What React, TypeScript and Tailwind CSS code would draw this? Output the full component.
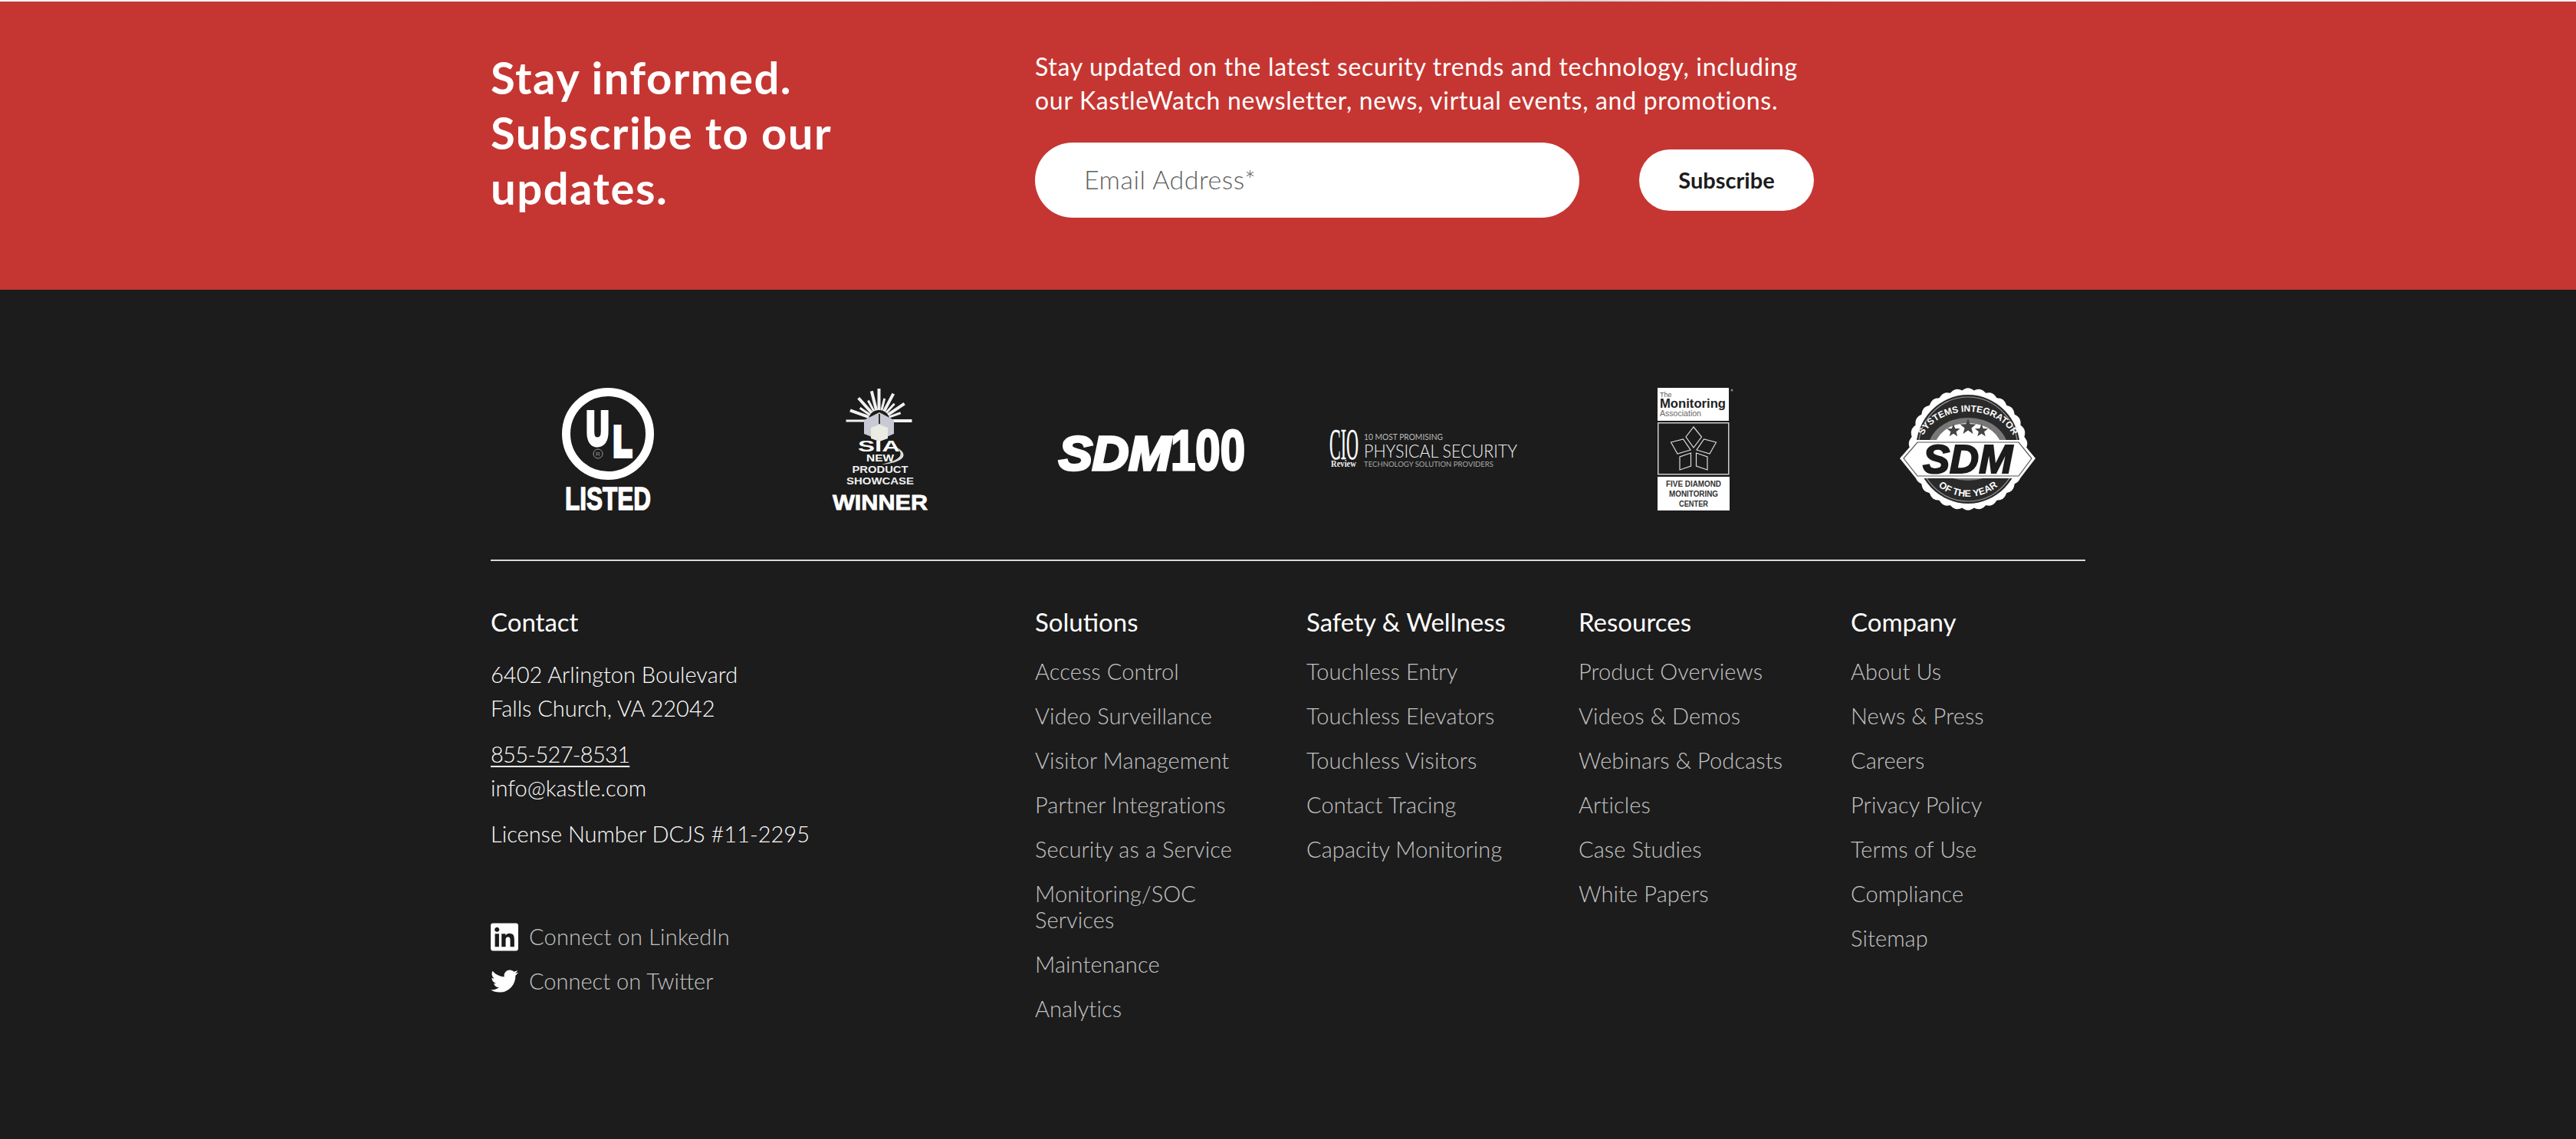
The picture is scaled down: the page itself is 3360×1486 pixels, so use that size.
import { FaLinkedin, FaTwitter } from "react-icons/fa";

const columns = [
  {
    title: "Solutions",
    links: [
      "Access Control",
      "Video Surveillance",
      "Visitor Management",
      "Partner Integrations",
      "Security as a Service",
      "Monitoring/SOC Services",
      "Maintenance",
      "Analytics",
    ],
  },
  {
    title: "Safety & Wellness",
    links: ["Touchless Entry", "Touchless Elevators", "Touchless Visitors", "Contact Tracing", "Capacity Monitoring"],
  },
  {
    title: "Resources",
    links: ["Product Overviews", "Videos & Demos", "Webinars & Podcasts", "Articles", "Case Studies", "White Papers"],
  },
  {
    title: "Company",
    links: ["About Us", "News & Press", "Careers", "Privacy Policy", "Terms of Use", "Compliance", "Sitemap"],
  },
];

const sans = "Liberation Sans, Arial, sans-serif";
const serif = "Liberation Serif, serif";
const lato = "Lato, sans-serif";

const UlLogo = () => (
  <svg width="124" height="160" viewBox="0 0 124 160" className="overflow-visible">
    <circle cx="62" cy="60" r="54.5" fill="none" stroke="#fff" strokeWidth="11" />
    <text x="34" y="74" fill="#fff" stroke="#fff" strokeWidth="6" fontFamily={sans} fontWeight="700" fontSize="61" textLength="29" lengthAdjust="spacingAndGlyphs">U</text>
    <text x="69" y="89" fill="#fff" stroke="#fff" strokeWidth="6" fontFamily={sans} fontWeight="700" fontSize="56" textLength="24" lengthAdjust="spacingAndGlyphs">L</text>
    <circle cx="49" cy="86" r="6" fill="none" stroke="#999" strokeWidth="1" />
    <text x="49" y="89" fill="#999" fontFamily={sans} fontSize="8" textAnchor="middle">R</text>
    <text x="6" y="158.5" fill="#fff" stroke="#fff" strokeWidth="1.5" fontFamily={sans} fontWeight="700" fontSize="42" textLength="112" lengthAdjust="spacingAndGlyphs">LISTED</text>
  </svg>
);

const rayAngles = [-90, -76, -62, -48, -34, -20, 0, 180, 200, 214, 228, 242, 256];

const SiaLogo = () => (
  <svg width="124" height="160" viewBox="0 0 124 160" className="overflow-visible">
    {rayAngles.map((a, i) => {
      const long = i % 2 === 0;
      const r = (a * Math.PI) / 180;
      const len = a === 0 || a === 180 ? 43 : a === -90 ? 42 : long ? 40 : 30;
      return (
        <line
          key={a}
          x1={60.5 + Math.cos(r) * 14}
          y1={43 + Math.sin(r) * 14}
          x2={60.5 + Math.cos(r) * len}
          y2={43 + Math.sin(r) * len}
          stroke="#f1f1f1"
          strokeWidth={long ? 4 : 3}
        />
      );
    })}
    <path d="M61 32 L80 42 L80 60 L61 68 L41 60 L41 42 Z" fill="#c9c9d6" />
    <path d="M50 52 L61 48 L72 52 L72 66 L61 70 L50 66 Z" fill="#ecebe2" />
    <path d="M61 34 L61 47" stroke="#333" strokeWidth="2" />
    <text x="33" y="83" fill="#fff" fontFamily={sans} fontWeight="700" fontSize="21" textLength="55" lengthAdjust="spacingAndGlyphs">SIA</text>
    <path d="M64 100 C90 98 102 88 84 78 C94 88 88 94 64 100 Z" fill="#ddd" />
    <text x="62" y="96" fill="#fff" fontFamily={sans} fontWeight="700" fontSize="13.5" textAnchor="middle" textLength="36" lengthAdjust="spacingAndGlyphs">NEW</text>
    <text x="62" y="111" fill="#f0f0f0" fontFamily={sans} fontWeight="700" fontSize="13.5" textAnchor="middle" textLength="73" lengthAdjust="spacingAndGlyphs">PRODUCT</text>
    <text x="62" y="126" fill="#f0f0f0" fontFamily={sans} fontWeight="700" fontSize="13.5" textAnchor="middle" textLength="88" lengthAdjust="spacingAndGlyphs">SHOWCASE</text>
    <text x="0" y="159" fill="#fff" stroke="#fff" strokeWidth="0.8" fontFamily={sans} fontWeight="700" fontSize="28" textLength="124" lengthAdjust="spacingAndGlyphs">WINNER</text>
  </svg>
);

const Sdm100Logo = () => (
  <svg width="243" height="56" viewBox="0 0 243 56" className="overflow-visible">
    <text x="0" y="55" fill="#fff" stroke="#fff" strokeWidth="3.5" fontFamily={sans} fontWeight="700" fontStyle="italic" fontSize="63" textLength="146" lengthAdjust="spacingAndGlyphs">SDM</text>
    <text x="146" y="55" fill="#fff" stroke="#fff" strokeWidth="3" fontFamily={sans} fontWeight="700" fontSize="75" textLength="97" lengthAdjust="spacingAndGlyphs">100</text>
  </svg>
);

const CioLogo = () => (
  <svg width="246" height="50" viewBox="0 0 246 50" className="overflow-visible">
    <text x="0" y="38" fill="#fff" stroke="#fff" strokeWidth="0.4" fontFamily={serif} fontSize="58" textLength="38" lengthAdjust="spacingAndGlyphs">CIO</text>
    <text x="2" y="48" fill="#eee" fontFamily={serif} fontWeight="700" fontSize="12" textLength="33" lengthAdjust="spacingAndGlyphs">Review</text>
    <text x="45" y="13" fill="#bbb" fontFamily={lato} fontSize="11" textLength="103" lengthAdjust="spacingAndGlyphs">10 MOST PROMISING</text>
    <text x="45" y="36" fill="#f2f2f2" fontFamily={lato} fontWeight="300" fontSize="24" textLength="200" lengthAdjust="spacingAndGlyphs">PHYSICAL SECURITY</text>
    <text x="45" y="48" fill="#aaa" fontFamily={lato} fontSize="10" textLength="169" lengthAdjust="spacingAndGlyphs">TECHNOLOGY SOLUTION PROVIDERS</text>
  </svg>
);

const MonitoringLogo = () => (
  <svg width="100" height="160" viewBox="0 0 100 160" className="overflow-visible">
    <rect x="0" y="0" width="93" height="43" fill="#fff" />
    <text x="3" y="12" fill="#555" fontFamily={sans} fontSize="9">The</text>
    <text x="3" y="26" fill="#222" fontFamily={sans} fontWeight="700" fontSize="16" textLength="86" lengthAdjust="spacingAndGlyphs">Monitoring</text>
    <text x="3" y="37" fill="#666" fontFamily={sans} fontSize="10" textLength="54" lengthAdjust="spacingAndGlyphs">Association</text>
    <circle cx="97" cy="3" r="1.5" fill="#888" />
    <rect x="0.75" y="45.75" width="92" height="67" fill="none" stroke="#ccc" strokeWidth="1.5" />
    <g fill="none" stroke="#ddd" strokeWidth="1.2">
      <path d="M47 51 L57.5 64 L47 78 L37 64 Z" />
      <path d="M17.5 71 L33.5 67 L43 81 L26 86 Z" />
      <path d="M76.5 71 L60.5 67 L51 81 L68 86 Z" />
      <path d="M43.5 85 L43.5 102 L29 107 L29 90 Z" />
      <path d="M50.5 85 L50.5 102 L65 107 L65 90 Z" />
    </g>
    <rect x="0" y="116" width="94" height="44" fill="#fff" />
    <g fill="#333" fontFamily={sans} fontWeight="700" fontSize="10.5" textAnchor="middle">
      <text x="47" y="129" textLength="72" lengthAdjust="spacingAndGlyphs">FIVE DIAMOND</text>
      <text x="47" y="142" textLength="64" lengthAdjust="spacingAndGlyphs">MONITORING</text>
      <text x="47" y="155" textLength="38" lengthAdjust="spacingAndGlyphs">CENTER</text>
    </g>
  </svg>
);

// scalloped edge of the badge
const scallop = () => {
  const pts: string[] = [];
  for (let i = 0; i < 240; i++) {
    const a = (i / 240) * Math.PI * 2;
    const r = 1 + Math.abs(Math.sin(a * 15)) * 0.035;
    pts.push(`${(89 + Math.cos(a) * 75 * r).toFixed(1)},${(80 + Math.sin(a) * 77 * r).toFixed(1)}`);
  }
  return pts.join(" ");
};

const star = (cx: number, cy: number, R: number) => {
  const pts: string[] = [];
  for (let i = 0; i < 10; i++) {
    const a = -Math.PI / 2 + (i * Math.PI) / 5;
    const r = i % 2 === 0 ? R : R * 0.42;
    pts.push(`${(cx + Math.cos(a) * r).toFixed(1)},${(cy + Math.sin(a) * r).toFixed(1)}`);
  }
  return pts.join(" ");
};

const SdmBadge = () => (
  <svg width="177" height="160" viewBox="0 0 177 160" className="overflow-visible">
    <defs>
      <path id="badgeTop" d="M 26 80 A 63 49 0 0 1 152 80" />
      <path id="badgeBottom" d="M 27 80 A 62 62 0 0 0 151 80" />
    </defs>
    <polygon points={scallop()} fill="#fff" />
    <ellipse cx="89" cy="80" rx="68" ry="71" fill="#2a2a2a" />
    <ellipse cx="89" cy="80" rx="65" ry="68" fill="none" stroke="#999" strokeWidth="1.2" />
    <ellipse cx="89" cy="80" rx="52" ry="41" fill="#777" />
    <ellipse cx="89" cy="80" rx="44" ry="34" fill="#fff" />
    <polygon points={star(70, 56, 9)} fill="#444" />
    <polygon points={star(89, 51, 11)} fill="#444" />
    <polygon points={star(106.5, 56, 9)} fill="#444" />
    <text fill="#fff" fontFamily={sans} fontWeight="700" fontSize="12">
      <textPath href="#badgeTop" startOffset="50%" textAnchor="middle">SYSTEMS INTEGRATOR</textPath>
    </text>
    <text fill="#fff" fontFamily={sans} fontWeight="700" fontSize="12.5">
      <textPath href="#badgeBottom" startOffset="50%" textAnchor="middle">OF THE YEAR</textPath>
    </text>
    <polygon points="0,92 21,68 157,68 177,92 157,118 21,118" fill="#fff" />
    <polygon points="5,92 23,71 155,71 172,92 155,115 23,115" fill="none" stroke="#555" strokeWidth="1.2" />
    <text x="30" y="111" fill="#1c1c1c" stroke="#1c1c1c" strokeWidth="2" fontFamily={sans} fontWeight="700" fontStyle="italic" fontSize="51" textLength="117" lengthAdjust="spacingAndGlyphs">SDM</text>
  </svg>
);

const App = () => {
  return (
    <div className="flex h-[1486px] flex-col font-['Lato',sans-serif] text-white">
      <div className="h-[2px] bg-linear-to-r from-white from-50% via-[#d4d4d4] via-61% to-white to-72%"></div>
      <section className="h-[376px] bg-[#c53632]">
        <div className="mx-auto flex w-[2080px] pt-[63px]">
          <h2 className="w-[710px] text-[58px] font-bold leading-[72px] tracking-[1.5px]">
            Stay informed.
            <br />
            Subscribe to our
            <br />
            updates.
          </h2>
          <div>
            <p className="w-[1010px] text-[32px] leading-[44px] font-normal tracking-[0.7px]">
              Stay updated on the latest security trends and technology, including
              <br />
              our KastleWatch newsletter, news, virtual events, and promotions.
            </p>
            <form className="mt-[33px] flex items-center gap-[78px]">
              <input
                className="h-[98px] w-[710px] rounded-full bg-white pb-[4px] pl-[64px] text-[34px] font-light tracking-[0.5px] text-black outline-none placeholder:text-[#5f5f5f]"
                placeholder="Email Address*"
              />
              <button type="button" className="h-[80px] w-[228px] rounded-full bg-white text-[29px] font-bold text-[#1c1c1c]">
                Subscribe
              </button>
            </form>
          </div>
        </div>
      </section>

      <footer className="flex-1 bg-[#1c1c1c]">
        <div className="mx-auto w-[2080px]">
          <div className="-mx-6 grid h-[288px] grid-cols-6 items-center justify-items-center pt-[128px]">
            <UlLogo />
            <SiaLogo />
            <Sdm100Logo />
            <CioLogo />
            <MonitoringLogo />
            <SdmBadge />
          </div>
          <div className="mt-[64px] grid grid-cols-[710px_354px_355px_355px_306px] border-t-2 border-[#d8d8d8] pt-[57px]">
            <div className="text-[29px] leading-[44px] font-light">
              <h3 className="text-[33px] leading-[44px] font-normal">Contact</h3>
              <p className="mt-[25px]">
                6402 Arlington Boulevard
                <br />
                Falls Church, VA 22042
              </p>
              <p className="mt-[16px] tracking-[-0.7px] underline underline-offset-4">855-527-8531</p>
              <p>info@kastle.com</p>
              <p className="mt-[16px]">License Number DCJS #11-2295</p>
              <div className="mt-[90px] flex items-center gap-[14px] text-[#c4c4c4]">
                <FaLinkedin className="h-[41px] w-[36px] text-white" />
                <span className="tracking-[0.2px]">Connect on LinkedIn</span>
              </div>
              <div className="mt-[14px] flex items-center gap-[14px] text-[#c4c4c4]">
                <FaTwitter className="h-[36px] w-[36px] text-white" />
                <span>Connect on Twitter</span>
              </div>
            </div>
            {columns.map((col) => (
              <div key={col.title}>
                <h3 className="text-[33px] leading-[44px] font-normal">{col.title}</h3>
                <ul className="mt-[26px] flex w-[290px] flex-col gap-[24px] text-[29px] leading-[34px] font-light tracking-[0.1px] text-[#c4c4c4]">
                  {col.links.map((link) => (
                    <li key={link}>{link}</li>
                  ))}
                </ul>
              </div>
            ))}
          </div>
        </div>
      </footer>
    </div>
  );
};

export default App;
